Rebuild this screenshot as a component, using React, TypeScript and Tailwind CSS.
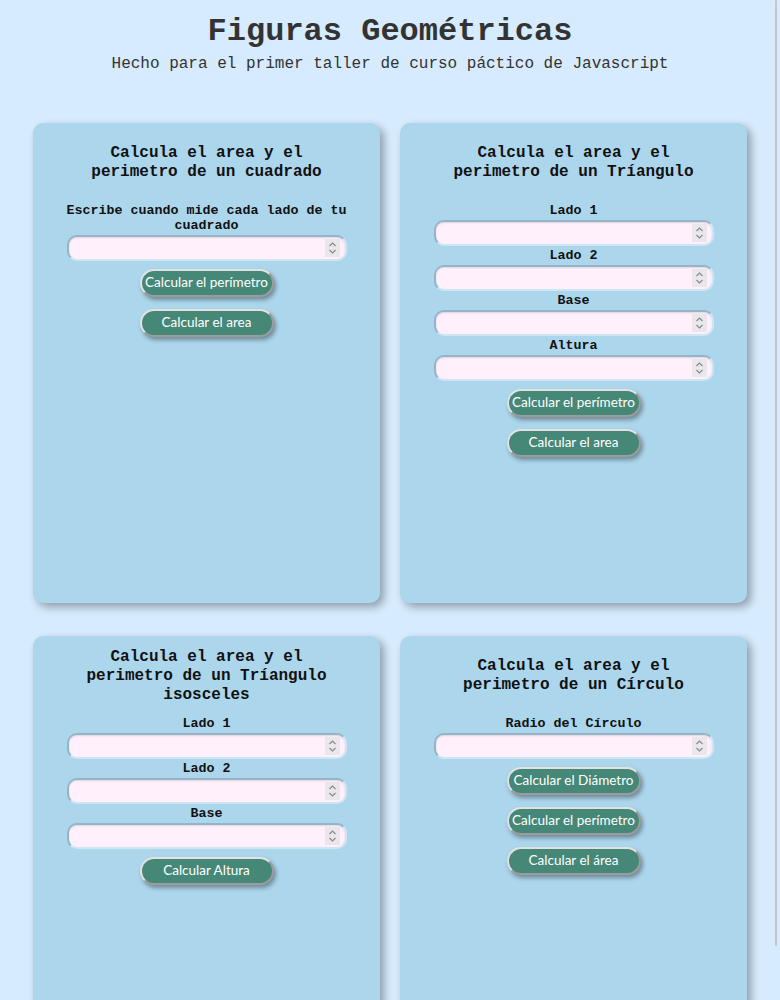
import React from "react";

const mono = { fontFamily: '"Liberation Mono", "Courier New", monospace' };

function Spinner() {
  return (
    <div className="pointer-events-none absolute right-[7px] top-[4px] flex h-[18px] w-[15px] items-center justify-center bg-[#e9e6ec]">
      <svg width="9" height="14" viewBox="0 0 9 14" fill="none" stroke="#8a8a8a" strokeWidth="1.2">
        <path d="M1.5 5 L4.5 2 L7.5 5" />
        <path d="M1.5 9 L4.5 12 L7.5 9" />
      </svg>
    </div>
  );
}

function Field({ label }: { label: string }) {
  return (
    <>
      <label className="block w-full text-center text-[13.33px] font-bold leading-[15px] text-[#111]" style={mono}>
        {label}
      </label>
      <div className="relative my-[2px] h-[26px] w-[280px]">
        <input
          type="number"
          className="h-full w-full rounded-[10px] border-2 border-t-[#94b4c8] border-l-[#94b4c8] border-b-[#cde6f4] border-r-[#cde6f4] bg-[#fff0fc] px-2 text-sm shadow-[inset_0_1px_2px_rgba(0,0,0,0.12)] outline-none [appearance:textfield] [&::-webkit-inner-spin-button]:appearance-none [&::-webkit-outer-spin-button]:appearance-none"
        />
        <Spinner />
      </div>
    </>
  );
}

function Btn({ children }: { children: React.ReactNode }) {
  return (
    <button
      className="h-[28px] w-[134px] rounded-full border-2 border-t-[#e2e2e2] border-l-[#e2e2e2] border-b-[#9c9c9c] border-r-[#9c9c9c] bg-[#468878] text-[13.5px] leading-none text-white shadow-[2px_3px_4px_rgba(0,0,0,0.35)]"
      style={{ fontFamily: 'Lato, "Open Sans", sans-serif' }}
    >
      {children}
    </button>
  );
}

function Card({
  title,
  children,
}: {
  title: React.ReactNode;
  children: React.ReactNode;
}) {
  return (
    <section className="h-[480px] rounded-[10px] bg-[#acd6ec] px-[33px] shadow-[4px_4px_9px_rgba(0,0,0,0.33)]">
      <div className="flex h-[80px] items-center justify-center">
        <h2 className="text-center text-[16px] font-bold leading-[19px] text-[#111]" style={mono}>
          {title}
        </h2>
      </div>
      <div className="flex flex-col items-center">{children}</div>
    </section>
  );
}

function Buttons({ labels }: { labels: string[] }) {
  return (
    <div className="mt-[6px] flex flex-col items-center gap-[12px]">
      {labels.map((l) => (
        <Btn key={l}>{l}</Btn>
      ))}
    </div>
  );
}

export default function App() {
  return (
    <div className="min-h-[1000px] w-full bg-[#d6ebfd] pb-10">
      <header className="pt-[14px] text-center text-[#333]" style={mono}>
        <h1 className="text-[32px] font-bold leading-[36px]">Figuras Geométricas</h1>
        <p className="mt-[5px] text-[16px] leading-[18px]">
          Hecho para el primer taller de curso páctico de Javascript
        </p>
      </header>

      <main className="mx-auto mt-[50px] grid w-[714px] grid-cols-2 gap-x-[20px] gap-y-[33px]">
        <Card title={<>Calcula el area y el<br />perimetro de un cuadrado</>}>
          <Field label="Escribe cuando mide cada lado de tu cuadrado" />
          <Buttons labels={["Calcular el perímetro", "Calcular el area"]} />
        </Card>
        <Card title={<>Calcula el area y el<br />perimetro de un Tríangulo</>}>
          <Field label="Lado 1" />
          <Field label="Lado 2" />
          <Field label="Base" />
          <Field label="Altura" />
          <Buttons labels={["Calcular el perímetro", "Calcular el area"]} />
        </Card>
        <Card title={<>Calcula el area y el<br />perimetro de un Tríangulo<br />isosceles</>}>
          <Field label="Lado 1" />
          <Field label="Lado 2" />
          <Field label="Base" />
          <Buttons labels={["Calcular Altura"]} />
        </Card>
        <Card title={<>Calcula el area y el<br />perimetro de un Círculo</>}>
          <Field label="Radio del Círculo" />
          <Buttons labels={["Calcular el Diámetro", "Calcular el perímetro", "Calcular el área"]} />
        </Card>
      </main>

      <div className="fixed right-[3px] top-0 h-[946px] w-[2px] rounded-full bg-[#c6c6c6]" />
    </div>
  );
}
